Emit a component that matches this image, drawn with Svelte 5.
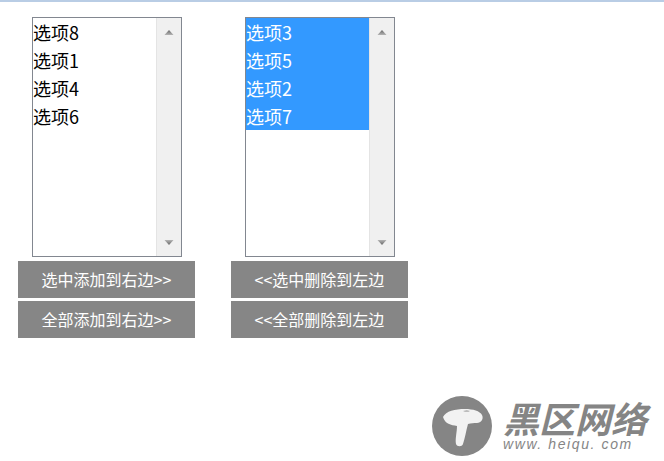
<script>
  const panels = [
    { items: ['选项8', '选项1', '选项4', '选项6'], selected: false, actions: ['选中添加到右边>>', '全部添加到右边>>'] },
    { items: ['选项3', '选项5', '选项2', '选项7'], selected: true, actions: ['<<选中删除到左边', '<<全部删除到左边'] }
  ];
</script>

<div class="page">
  <div class="panels">
    {#each panels as panel}
      <section class="panel">
        <div class="listbox">
          <ul class="options" class:selected={panel.selected}>
            {#each panel.items as item}
              <li>{item}</li>
            {/each}
          </ul>
          <div class="scrollbar">
            <svg class="arrow" width="12" height="6" viewBox="0 0 12 6"><path d="M1.5 6 6 1l4.500 5z" fill="url(#up)"/><defs><linearGradient id="up" x1="0" y1="0" x2="0" y2="1"><stop offset="0" stop-color="#666"/><stop offset="1" stop-color="#b5b5b5"/></linearGradient></defs></svg>
            <svg class="arrow" width="12" height="6" viewBox="0 0 12 6"><path d="M1.500 0h9L6 5z" fill="url(#down)"/><defs><linearGradient id="down" x1="0" y1="0" x2="0" y2="1"><stop offset="0" stop-color="#b5b5b5"/><stop offset="1" stop-color="#666"/></linearGradient></defs></svg>
          </div>
        </div>
        {#each panel.actions as action}
          <button type="button">{action}</button>
        {/each}
      </section>
    {/each}
  </div>

  <div class="watermark">
    <svg class="mark" width="60" height="60" viewBox="0 0 60 60">
      <circle cx="30" cy="30" r="30" fill="#858585"/>
      <path d="M11 21c3-6 12-8 22-8 8 0 15 2 17 6 2 4-1 8-5 8-3 0-6 0-9 1-2 7-3 14-5 20-1 3-6 3-7 0-1-5 1-12 1-18-6-1-12-2-14-9z" fill="#f2f2f2"/>
      <path d="M31 15q4-1 7 0-3 1-7 0z" fill="#858585"/>
    </svg>
    <div class="brand">
      <div class="name">黑区网络</div>
      <div class="url">www. heiqu. com</div>
    </div>
  </div>
</div>

<style>
  :global(body) {
    margin: 0;
    background: #fff;
  }

  .page {
    position: relative;
    height: 461px;
    border-top: 2px solid #b9cde5;
    box-sizing: border-box;
    font-family: "Noto Sans CJK SC", "Noto Sans", sans-serif;
    overflow: hidden;
  }

  .panels {
    display: flex;
    gap: 36px;
    padding: 15px 0 0 18px;
  }

  .panel {
    display: flex;
    flex-direction: column;
    width: 177px;
  }

  .listbox {
    display: flex;
    width: 150px;
    height: 240px;
    box-sizing: border-box;
    margin: 0 0 4px 14px;
    border: 1px solid #828790;
    background: #fff;
  }

  .options {
    flex: 1;
    margin: 0;
    padding: 0;
    list-style: none;
    font-size: 18px;
    color: #000;
  }

  .options li {
    height: 28px;
    line-height: 28px;
  }

  .options.selected li {
    background: #3399ff;
    color: #fff;
  }

  .scrollbar {
    display: flex;
    flex-direction: column;
    justify-content: space-between;
    align-items: center;
    width: 25px;
    box-sizing: border-box;
    padding: 11px 0 10px;
    background: #f0f0f0;
    border-left: 1px solid #e4e4e4;
  }

  .arrow {
    display: block;
  }

  button {
    width: 177px;
    height: 37px;
    margin: 0 0 3px;
    padding: 0;
    border: 0;
    background: #868686;
    color: #fff;
    font-family: inherit;
    font-size: 16px;
    line-height: 37px;
  }

  .watermark {
    position: absolute;
    left: 432px;
    top: 394px;
    display: flex;
    gap: 11px;
  }

  .brand {
    color: #858585;
  }

  .name {
    margin-top: 2px;
    font-size: 36px;
    line-height: 38px;
    font-weight: 700;
    font-style: italic;
    letter-spacing: 0;
    white-space: nowrap;
  }

  .url {
    font-family: "Liberation Sans", sans-serif;
    font-size: 14px;
    line-height: 16px;
    font-style: italic;
    letter-spacing: 1.6px;
    white-space: nowrap;
  }
</style>
